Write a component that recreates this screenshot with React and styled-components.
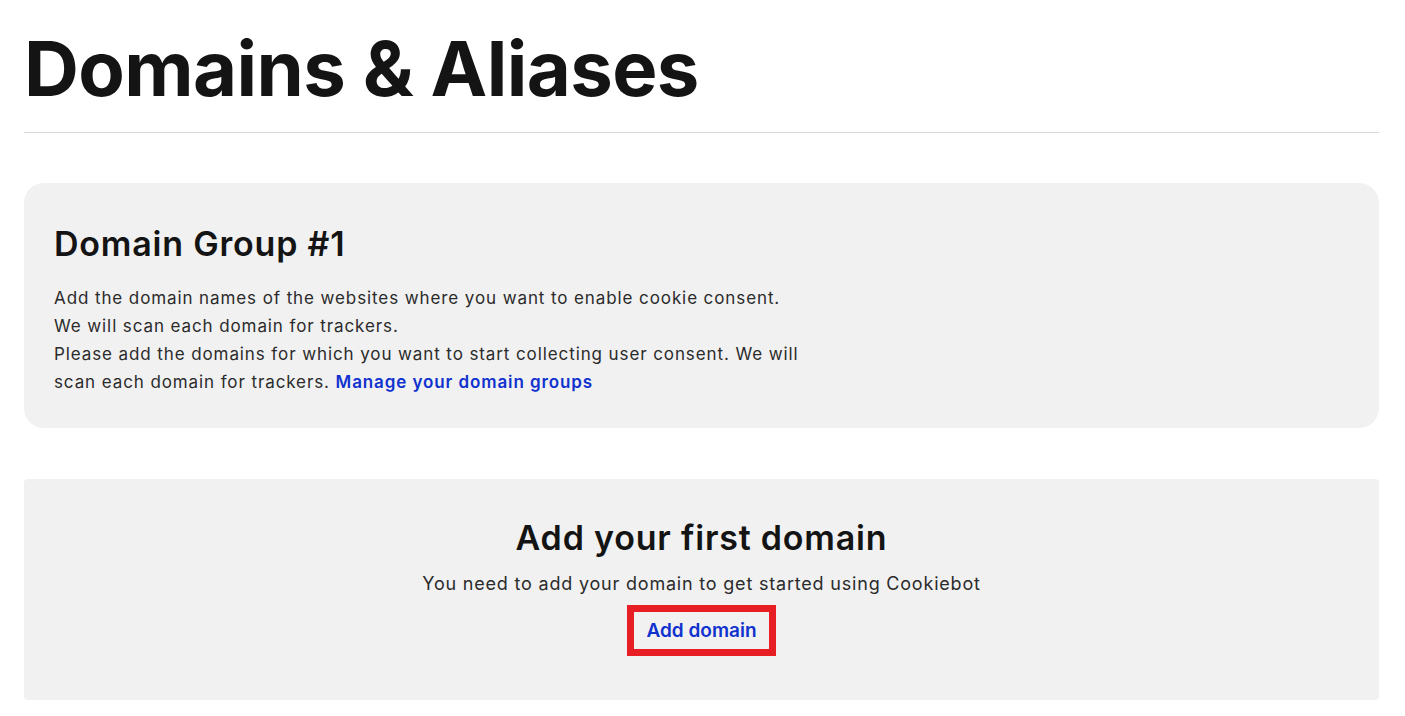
import React from "react";
import styled, { createGlobalStyle } from "styled-components";

const Global = createGlobalStyle`
  html, body { margin: 0; padding: 0; background: #ffffff; }
  body { font-family: Inter, "Noto Sans", Arial, sans-serif; color: #141414; }
  * { box-sizing: border-box; }
`;

const Page = styled.main`
  padding: 0 26px 0 24px;
  display: flex;
  flex-direction: column;
`;

const PageTitle = styled.h1`
  margin: 0;
  padding-top: 22px;
  font-size: 76px;
  line-height: 92px;
  font-weight: 700;
  letter-spacing: -0.6px;
  color: #141414;
`;

const Divider = styled.hr`
  margin: 18px 0 0;
  border: 0;
  border-top: 1px solid #d9d9d9;
`;

const Card = styled.section`
  background: #f1f1f1;
  border-radius: ${(p) => p.$radius}px;
  margin-top: ${(p) => p.$top}px;
  padding: ${(p) => p.$padding};
  display: flex;
  flex-direction: column;
  align-items: ${(p) => (p.$center ? "center" : "flex-start")};
  text-align: ${(p) => (p.$center ? "center" : "left")};
`;

const CardTitle = styled.h2`
  margin: 0;
  font-size: 34px;
  line-height: 44px;
  font-weight: 600;
  color: #141414;
  letter-spacing: 0.8px;
`;

const Body = styled.p`
  margin: ${(p) => p.$margin};
  font-size: ${(p) => p.$size || 17}px;
  line-height: 28px;
  font-weight: 400;
  color: #2b2b2b;
  letter-spacing: ${(p) => p.$spacing || 0.9}px;
  max-width: ${(p) => p.$max || "none"};
`;

const Link = styled.a`
  color: #1032cf;
  font-weight: 600;
  text-decoration: none;
`;

const OutlinedButton = styled.button`
  margin-top: 7px;
  background: transparent;
  border: 7px solid #e81e25;
  padding: 0;
  height: 51px;
  width: 149px;
  font-family: inherit;
  font-size: 19px;
  font-weight: 600;
  color: #1032cf;
  cursor: pointer;
`;

export default function App() {
  return (
    <>
      <Global />
      <Page>
        <PageTitle>Domains &amp; Aliases</PageTitle>
        <Divider />
        <Card $radius={20} $top={50} $padding="39px 30px 32px">
          <CardTitle>Domain Group #1</CardTitle>
          <Body $margin="18px 0 0" $max="748px">
            Add the domain names of the websites where you want to enable cookie consent.
            <br />
            We will scan each domain for trackers.
            <br />
            Please add the domains for which you want to start collecting user consent. We will
            scan each domain for trackers. <Link href="#">Manage your domain groups</Link>
          </Body>
        </Card>
        <Card $radius={4} $top={51} $padding="37px 30px 44px" $center>
          <CardTitle>Add your first domain</CardTitle>
          <Body $margin="10px 0 0" $size={18} $spacing={0.8}>
            You need to add your domain to get started using Cookiebot
          </Body>
          <OutlinedButton>Add domain</OutlinedButton>
        </Card>
      </Page>
    </>
  );
}
